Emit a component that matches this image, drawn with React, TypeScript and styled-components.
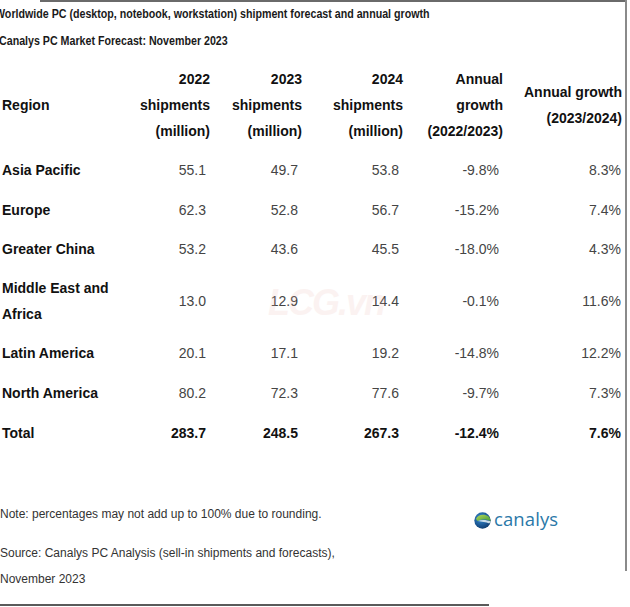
import styled, { createGlobalStyle } from "styled-components";

const GlobalStyle = createGlobalStyle`
  html, body {
    margin: 0;
    padding: 0;
    background: #fff;
  }
  body {
    font-family: "Liberation Sans", Arial, sans-serif;
    color: #111;
  }
`;

type Row = {
  region: string;
  values: string[];
  total?: boolean;
  tall?: boolean;
};

const rows: Row[] = [
  { region: "Asia Pacific", values: ["55.1", "49.7", "53.8", "-9.8%", "8.3%"] },
  { region: "Europe", values: ["62.3", "52.8", "56.7", "-15.2%", "7.4%"] },
  { region: "Greater China", values: ["53.2", "43.6", "45.5", "-18.0%", "4.3%"] },
  { region: "Middle East and Africa", values: ["13.0", "12.9", "14.4", "-0.1%", "11.6%"], tall: true },
  { region: "Latin America", values: ["20.1", "17.1", "19.2", "-14.8%", "12.2%"] },
  { region: "North America", values: ["80.2", "72.3", "77.6", "-9.7%", "7.3%"] },
  { region: "Total", values: ["283.7", "248.5", "267.3", "-12.4%", "7.6%"], total: true },
];

const COLUMNS = "120px 92px 92px 101px 100px 119px";

const Frame = styled.div`
  position: relative;
  width: 627px;
  height: 607px;
  overflow: hidden;
  background: #fff;

  /* top rule */
  &::before {
    content: "";
    position: absolute;
    top: 0;
    left: 40px;
    right: 0;
    height: 2px;
    background: #6a6a6a;
  }

  /* right rule */
  &::after {
    content: "";
    position: absolute;
    top: 0;
    right: 0;
    width: 2px;
    height: 571px;
    background: #8a8a8a;
  }
`;

const BottomRule = styled.div`
  position: absolute;
  left: 0;
  bottom: 1px;
  width: 489px;
  height: 2px;
  background: #5a5a5a;
`;

const Heading = styled.header`
  display: flex;
  flex-direction: column;
`;

// the source image is squeezed sideways, so the caption text is narrowed to match
const Title = styled.div<{ $indent: number }>`
  height: 27px;
  line-height: 27px;
  font-size: 13px;
  font-weight: 700;
  color: #1a1a1a;
  white-space: nowrap;
  margin-left: ${(p) => p.$indent}px;
  transform: scaleX(0.82);
  transform-origin: left center;
`;

const Table = styled.div`
  margin-top: 12px;
  display: grid;
  grid-template-columns: ${COLUMNS};
`;

const HeaderCell = styled.div<{ $left?: boolean }>`
  height: 78px;
  display: flex;
  align-items: center;
  justify-content: ${(p) => (p.$left ? "flex-start" : "flex-end")};
  text-align: ${(p) => (p.$left ? "left" : "right")};
  padding: 0 2px;
  font-size: 14px;
  font-weight: 700;
  line-height: 26px;
  color: #111;
  margin-bottom: 6px;
`;

const Cell = styled.div<{ $left?: boolean; $bold?: boolean; $tall?: boolean; $last?: boolean }>`
  height: ${(p) => (p.$tall ? "64px" : "39.8px")};
  display: flex;
  align-items: center;
  justify-content: ${(p) => (p.$left ? "flex-start" : "flex-end")};
  padding: ${(p) => (p.$left ? "0 0 0 2px" : p.$last ? "0 3px 0 0" : "0 6px 0 0")};
  font-size: 14px;
  line-height: 26px;
  font-weight: ${(p) => (p.$left || p.$bold ? 700 : 400)};
  color: ${(p) => (p.$left || p.$bold ? "#111" : "#454545")};
`;

const Footer = styled.footer`
  margin-top: 48px;
  display: grid;
  grid-template-columns: 474px 1fr;
`;

const Notes = styled.div`
  display: flex;
  flex-direction: column;
`;

const Note = styled.p<{ $gap?: number }>`
  margin: ${(p) => p.$gap ?? 0}px 0 0;
  font-size: 12px;
  line-height: 26px;
  color: #333;
`;

const Logo = styled.div`
  display: flex;
  align-items: center;
  gap: 3px;
  height: 26px;
  margin-top: 7px;
`;

const LogoText = styled.span`
  font-family: "Open Sans", "Noto Sans", sans-serif;
  font-size: 18.5px;
  color: #2a78a8;
  letter-spacing: 0.1px;
  line-height: 1;
  margin-top: -3px;
`;

const Watermark = styled.div`
  position: absolute;
  left: 268px;
  top: 282px;
  font-family: "Liberation Sans", Arial, sans-serif;
  font-size: 36px;
  font-weight: 700;
  font-style: italic;
  color: #e9b3ab;
  opacity: 0.16;
  letter-spacing: -2px;
  pointer-events: none;
`;

const Globe = () => (
  <svg width="17" height="17" viewBox="0 0 20 20">
    <defs>
      <radialGradient id="gb" cx="40%" cy="35%" r="70%">
        <stop offset="0%" stopColor="#3c8fd0" />
        <stop offset="60%" stopColor="#1d5c9a" />
        <stop offset="100%" stopColor="#0f3a6b" />
      </radialGradient>
      <linearGradient id="gg" x1="0" y1="0" x2="1" y2="1">
        <stop offset="0%" stopColor="#b6d957" />
        <stop offset="100%" stopColor="#3f9a3a" />
      </linearGradient>
    </defs>
    <circle cx="10" cy="10" r="9.6" fill="url(#gb)" />
    <path d="M2.5 7.5 C5 3 12 1.5 17.5 5.5 C19.3 7.5 19.6 9.5 19.4 11 C16 8.5 10 8 4.5 10.5 C3.3 9.8 2.7 8.7 2.5 7.5 Z" fill="url(#gg)" />
    <path d="M4.5 10.5 C9 8.6 15 9 19.4 11 C19 12 18.6 12.8 18 13.5 C14 11.6 9 11.4 4.5 10.5 Z" fill="#e8f2f7" opacity="0.85" />
  </svg>
);

const headers = [
  "Region",
  "2022\nshipments\n(million)",
  "2023\nshipments\n(million)",
  "2024\nshipments\n(million)",
  "Annual\ngrowth\n(2022/2023)",
  "Annual growth\n(2023/2024)",
];

export default function App() {
  return (
    <>
      <GlobalStyle />
      <Frame>
        <Heading>
          <Title $indent={-5}>
            Worldwide PC (desktop, notebook, workstation) shipment forecast and annual growth
          </Title>
          <Title $indent={-1}>Canalys PC Market Forecast: November 2023</Title>
        </Heading>

        <Table role="table">
          {headers.map((h, i) => (
            <HeaderCell key={h} $left={i === 0}>
              <span>
                {h.split("\n").map((line, j) => (
                  <span key={j}>
                    {j > 0 && <br />}
                    {line}
                  </span>
                ))}
              </span>
            </HeaderCell>
          ))}

          {rows.map((r) => (
            <>
              <Cell key={r.region} $left $tall={r.tall}>
                {r.region}
              </Cell>
              {r.values.map((v, i) => (
                <Cell
                  key={r.region + i}
                  $bold={r.total}
                  $tall={r.tall}
                  $last={i === r.values.length - 1}
                >
                  {v}
                </Cell>
              ))}
            </>
          ))}
        </Table>

        <Footer>
          <Notes>
            <Note>Note: percentages may not add up to 100% due to rounding.</Note>
            <Note $gap={13}>Source: Canalys PC Analysis (sell-in shipments and forecasts),</Note>
            <Note>November 2023</Note>
          </Notes>
          <Logo>
            <Globe />
            <LogoText>canalys</LogoText>
          </Logo>
        </Footer>

        <Watermark>LCG.vn</Watermark>
        <BottomRule />
      </Frame>
    </>
  );
}
